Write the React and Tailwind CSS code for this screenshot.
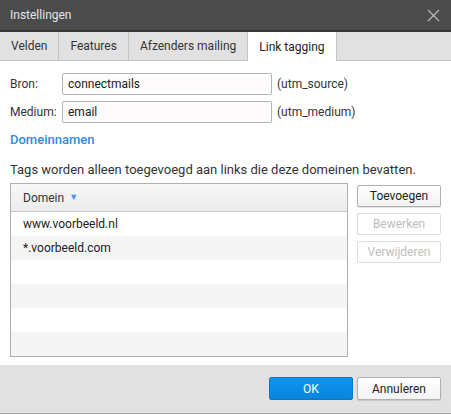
export default function App() {
  const rows = ["www.voorbeeld.nl", "*.voorbeeld.com", "", "", "", ""];

  return (
    <div className="w-[451px] h-[414px] flex flex-col bg-white font-['Roboto',sans-serif] text-[12px] text-[#333]">
      {/* titel */}
      <div className="h-[32px] shrink-0 flex items-center justify-between pl-[10px] pr-[11px] bg-[#4b4b4b] border-b-2 border-[#363636]">
        <span className="text-[#e6e6e6] text-[12px]">Instellingen</span>
        <svg width="13" height="13" viewBox="0 0 13 13" className="text-[#b5b5b5]">
          <path d="M1 1L12 12M12 1L1 12" stroke="currentColor" strokeWidth="1.4" />
        </svg>
      </div>

      {/* tabs */}
      <div className="h-[29px] shrink-0 flex bg-[#e1e1e1] border-b border-[#c4c4c4]">
        <div className="px-[11px] flex items-center border-r border-[#c4c4c4]">Velden</div>
        <div className="px-[11px] flex items-center border-r border-[#c4c4c4]">Features</div>
        <div className="px-[11px] flex items-center border-r border-[#c4c4c4]">Afzenders mailing</div>
        <div className="px-[11px] flex items-center border-r border-[#c4c4c4] bg-white h-[29px] text-[#222]">
          Link tagging
        </div>
      </div>

      {/* inhoud */}
      <div className="flex-1 flex flex-col px-[10px] pt-[12px]">
        <div className="flex items-center h-[22px]">
          <span className="w-[52px]">Bron:</span>
          <input
            readOnly
            value="connectmails"
            className="w-[210px] h-[22px] border border-[#b3b3b3] rounded-[2px] bg-[#fdfbfb] px-[5px] text-[12px] text-[#222] outline-none"
          />
          <span className="ml-[5px]">(utm_source)</span>
        </div>
        <div className="flex items-center h-[22px] mt-[6px]">
          <span className="w-[52px]">Medium:</span>
          <input
            readOnly
            value="email"
            className="w-[210px] h-[22px] border border-[#b3b3b3] rounded-[2px] bg-[#fdfbfb] px-[5px] text-[12px] text-[#222] outline-none"
          />
          <span className="ml-[5px]">(utm_medium)</span>
        </div>

        <div className="mt-[9px] leading-[16px] text-[13px] font-medium text-[#2b8de0]">Domeinnamen</div>

        <div className="mt-[14px] leading-[16px] text-[13px]">
          Tags worden alleen toegevoegd aan links die deze domeinen bevatten.
        </div>

        <div className="flex mt-[5px]">
          <div className="w-[338px] border border-[#b0b0b0]">
            <div className="h-[28px] flex items-center pl-[12px] bg-gradient-to-b from-[#f7f7f7] to-[#ececec] border-b border-[#c8c8c8]">
              Domein
              <span className="ml-[5px] text-[#3d9be9] text-[9px]">▼</span>
            </div>
            {rows.map((r, i) => (
              <div
                key={i}
                className={
                  "h-[24px] flex items-center pl-[12px] text-[#222] " +
                  (i % 2 === 1 ? "bg-[#f4f4f4]" : "bg-white")
                }
              >
                {r}
              </div>
            ))}
          </div>

          <div className="ml-[9px] flex flex-col gap-[6px] pt-[2px]">
            <button className="w-[84px] h-[22px] border border-[#b0b0b0] rounded-[2px] bg-gradient-to-b from-white to-[#f1f1f1] shadow-[0_1px_1px_rgba(0,0,0,0.12)] text-[#222]">
              Toevoegen
            </button>
            <button className="w-[84px] h-[22px] border border-[#dcdcdc] rounded-[2px] bg-white text-[#bdbdbd]">
              Bewerken
            </button>
            <button className="w-[84px] h-[22px] border border-[#dcdcdc] rounded-[2px] bg-white text-[#bdbdbd]">
              Verwijderen
            </button>
          </div>
        </div>
      </div>

      {/* voet */}
      <div className="h-[49px] shrink-0 flex justify-end items-start gap-[4px] pt-[12px] pr-[10px] bg-[#e1e1e1] border-b border-[#a8a8a8]">
        <button className="w-[84px] h-[23px] rounded-[2px] border border-[#0a78c8] bg-gradient-to-b from-[#0f95ee] to-[#0984dd] text-white">
          OK
        </button>
        <button className="w-[84px] h-[23px] border border-[#b0b0b0] rounded-[2px] bg-gradient-to-b from-white to-[#f3f3f3] shadow-[0_1px_1px_rgba(0,0,0,0.12)] text-[#222]">
          Annuleren
        </button>
      </div>
    </div>
  );
}
